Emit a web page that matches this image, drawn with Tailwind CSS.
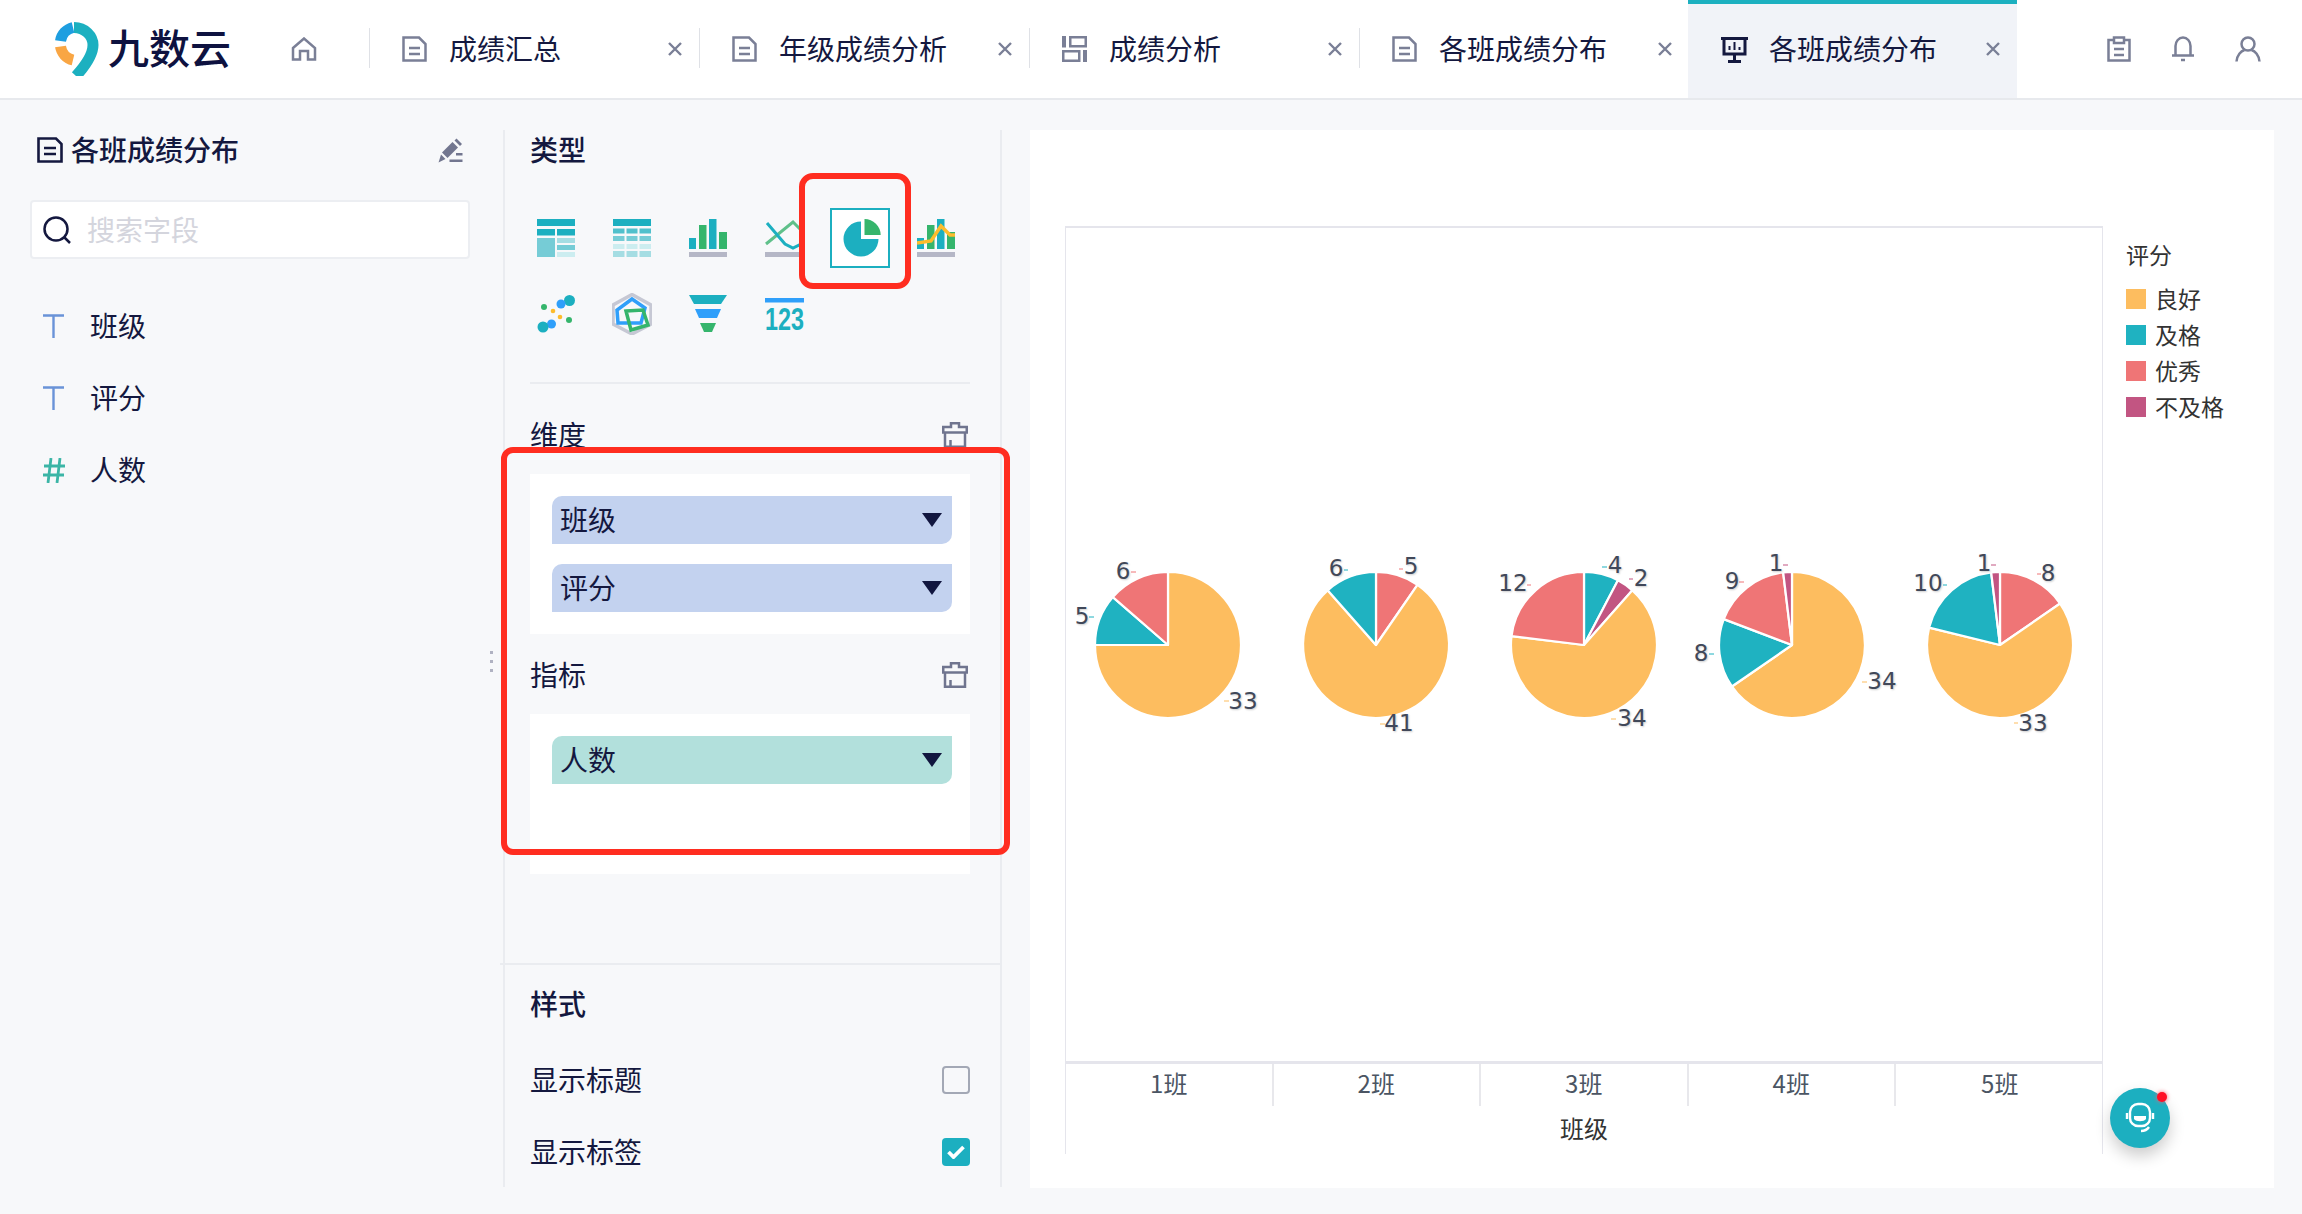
<!doctype html>
<html lang="zh">
<head>
<meta charset="utf-8">
<script src="https://cdn.jsdelivr.net/npm/@tailwindcss/browser@4"></script>
<title>各班成绩分布</title>
</head>
<body class="w-[2302px] h-[1214px] overflow-hidden bg-[#f7f8fa] text-[#14183f] font-['Noto_Sans_CJK_SC','Noto_Sans',sans-serif] text-[28px]">
<header class="flex h-[100px] bg-white border-b-2 border-[#e7e9ed]">
  <div class="flex items-center w-[291px] pl-[55px] gap-[9px]">
    <svg class="w-[44px] h-[54px]" viewBox="55 22 44 54" fill="none" stroke-width="11">
      <path d="M60.5 41 A16.5 16.5 0 0 1 73 27.5" stroke="#1e9ee0"/>
      <path d="M74 27.5 C85 27.5 93 36 93 45 C93 53 86 65 76 76" stroke="#1cb0c0"/>
      <path d="M60.5 46.5 A16.5 16.5 0 0 0 73 60" stroke="#f9a644"/>
    </svg>
    <span class="text-[41px] font-medium leading-none text-[#0e1240] pb-[6px]">九数云</span>
  </div>
  <div class="flex items-center w-[78px]">
    <svg class="w-[26px] h-[24px]" viewBox="0 0 26 24" fill="none" stroke="#7a7f96" stroke-width="2.5"><path d="M2 11 L13 1.5 L24 11 V22.5 H17 V14 H9 V22.5 H2 Z"/></svg>
  </div>
  <div class="relative flex items-center justify-between w-[330px] pl-[33px] pr-[17px]">
    <span class="absolute left-0 top-[28px] h-[40px] w-[1px] bg-[#dfe1e6]"></span>
    <div class="flex items-center gap-[22px]">
      <svg class="w-[25px] h-[26px]" viewBox="0 0 25 26" fill="none" stroke="#7a7f96" stroke-width="2.5"><path d="M1.5 1.5 H17 L23.5 8 V24.5 H1.5 Z"/><path d="M7 12 H18 M7 18 H18"/></svg>
      <span class="pb-[3px]">成绩汇总</span>
    </div>
    <svg class="w-[14px] h-[14px]" viewBox="0 0 14 14" stroke="#7a7f96" stroke-width="2.4"><path d="M1 1 L13 13 M13 1 L1 13"/></svg>
  </div>
  <div class="relative flex items-center justify-between w-[330px] pl-[33px] pr-[17px]">
    <span class="absolute left-0 top-[28px] h-[40px] w-[1px] bg-[#dfe1e6]"></span>
    <div class="flex items-center gap-[22px]">
      <svg class="w-[25px] h-[26px]" viewBox="0 0 25 26" fill="none" stroke="#7a7f96" stroke-width="2.5"><path d="M1.5 1.5 H17 L23.5 8 V24.5 H1.5 Z"/><path d="M7 12 H18 M7 18 H18"/></svg>
      <span class="pb-[3px]">年级成绩分析</span>
    </div>
    <svg class="w-[14px] h-[14px]" viewBox="0 0 14 14" stroke="#7a7f96" stroke-width="2.4"><path d="M1 1 L13 13 M13 1 L1 13"/></svg>
  </div>
  <div class="relative flex items-center justify-between w-[330px] pl-[33px] pr-[17px]">
    <span class="absolute left-0 top-[28px] h-[40px] w-[1px] bg-[#dfe1e6]"></span>
    <div class="flex items-center gap-[22px]">
      <svg class="w-[25px] h-[26px]" viewBox="0 0 25 26" fill="none" stroke="#7a7f96"><path d="M0 0 H4 V11.5 H0 Z" fill="#7a7f96" stroke="none"/><path d="M8.25 1.25 H23.75 V10.25 H8.25 Z" stroke-width="2.5"/><path d="M1.25 15.25 H17.25 V24.75 H1.25 Z" stroke-width="2.5"/><path d="M21 14 H25 V26 H21 Z" fill="#7a7f96" stroke="none"/></svg>
      <span class="pb-[3px]">成绩分析</span>
    </div>
    <svg class="w-[14px] h-[14px]" viewBox="0 0 14 14" stroke="#7a7f96" stroke-width="2.4"><path d="M1 1 L13 13 M13 1 L1 13"/></svg>
  </div>
  <div class="relative flex items-center justify-between w-[329px] pl-[33px] pr-[16px]">
    <span class="absolute left-0 top-[28px] h-[40px] w-[1px] bg-[#dfe1e6]"></span>
    <div class="flex items-center gap-[22px]">
      <svg class="w-[25px] h-[26px]" viewBox="0 0 25 26" fill="none" stroke="#7a7f96" stroke-width="2.5"><path d="M1.5 1.5 H17 L23.5 8 V24.5 H1.5 Z"/><path d="M7 12 H18 M7 18 H18"/></svg>
      <span class="pb-[3px]">各班成绩分布</span>
    </div>
    <svg class="w-[14px] h-[14px]" viewBox="0 0 14 14" stroke="#7a7f96" stroke-width="2.4"><path d="M1 1 L13 13 M13 1 L1 13"/></svg>
  </div>
  <div class="flex items-center justify-between w-[329px] h-[98px] pl-[33px] pr-[17px] bg-[#f1f3f8] border-t-4 border-[#1cb0c0]">
    <div class="flex items-center gap-[21px] -mt-[4px]">
      <svg class="w-[27px] h-[27px]" viewBox="0 0 27 27" fill="none" stroke="#14183f" stroke-width="3"><path d="M0 2.5 H27 M3 2.5 V18 H24 V2.5 M13.5 18 V24 M7 25.5 H20"/><path d="M8.5 14 V10 M13.5 14 V6 M18.5 14 V11" stroke-width="2"/></svg>
      <span class="pb-[3px]">各班成绩分布</span>
    </div>
    <svg class="w-[14px] h-[14px] -mt-[4px]" viewBox="0 0 14 14" stroke="#7a7f96" stroke-width="2.4"><path d="M1 1 L13 13 M13 1 L1 13"/></svg>
  </div>
  <div class="flex items-center ml-auto gap-[40px] pr-[41px]">
    <svg class="w-[24px] h-[26px]" viewBox="0 0 24 26" fill="none" stroke="#7a7f96" stroke-width="2.5"><path d="M7 4 H1.5 V24.5 H22.5 V4 H17"/><path d="M7 1.5 H17 V7 H7 Z M7 13 H17 M7 19 H17"/></svg>
    <svg class="w-[24px] h-[26px]" viewBox="0 0 24 26" fill="none" stroke="#7a7f96" stroke-width="2.5"><path d="M4.5 19 V10 A7.5 8.5 0 0 1 19.5 10 V19 M1 19.5 H23"/><path d="M10 24 H14"/></svg>
    <svg class="w-[26px] h-[26px]" viewBox="0 0 26 26" fill="none" stroke="#7a7f96" stroke-width="2.5"><circle cx="13" cy="8" r="6.5"/><path d="M1.5 25.5 C2 19 6 15 9.5 14 M24.5 25.5 C24 19 20 15 16.5 14"/></svg>
  </div>
</header>

<main class="relative flex h-[1114px]">
  <aside class="w-[503px] pt-[30px] shrink-0">
    <div class="flex items-center justify-between h-[40px] pl-[37px] pr-[40px]">
      <div class="flex items-center gap-[8px]">
        <svg class="w-[26px] h-[26px]" viewBox="0 0 26 26" fill="none" stroke="#14183f" stroke-width="2.6"><path d="M1.5 1.5 H19 L24.5 7 V24.5 H1.5 Z"/><path d="M7 11 H19 M7 17 H19"/></svg>
        <span class="font-medium pb-[3px]">各班成绩分布</span>
      </div>
      <svg class="w-[25px] h-[25px]" viewBox="0 0 25 25" fill="#72768f"><path d="M14.5 4 L20 9.5 L9.5 20 L4 14.5 Z"/><path d="M16.5 2.5 L18.5 .5 L24 6 L22 8 Z"/><path d="M3 16.5 L7.5 21 L.5 24.5 Z"/><path d="M18 15 H24.5 V17.5 H18 Z M11.5 21.5 H24.5 V24 H11.5 Z"/></svg>
    </div>
    <div class="flex items-center ml-[30px] mt-[30px] w-[440px] h-[59px] bg-white border-2 border-[#eceef2] rounded-[4px] pl-[11px] gap-[16px]">
      <svg class="w-[28px] h-[28px]" viewBox="0 0 28 28" fill="none" stroke="#14183f" stroke-width="2.5"><circle cx="13" cy="13" r="11.5"/><path d="M21 21 L27 27"/></svg>
      <span class="text-[#d4d5dd] pb-[2px]">搜索字段</span>
    </div>
    <ul class="mt-[31px] ml-[43px]">
      <li class="flex items-center h-[72px] gap-[26px]">
        <svg class="w-[21px] h-[24px]" viewBox="0 0 21 24" stroke="#6a93d8" stroke-width="2.4"><path d="M0 1.5 H21 M10.5 1.5 V24"/></svg>
        <span class="pb-[3px]">班级</span>
      </li>
      <li class="flex items-center h-[72px] gap-[26px]">
        <svg class="w-[21px] h-[24px]" viewBox="0 0 21 24" stroke="#6a93d8" stroke-width="2.4"><path d="M0 1.5 H21 M10.5 1.5 V24"/></svg>
        <span class="pb-[3px]">评分</span>
      </li>
      <li class="flex items-center h-[72px] gap-[25px]">
        <svg class="w-[22px] h-[25px]" viewBox="0 0 22 25" stroke="#3bb5a6" stroke-width="2.8"><path d="M8 0 L5 25 M17 0 L14 25 M1 8 H22 M0 17 H21"/></svg>
        <span class="pb-[3px]">人数</span>
      </li>
    </ul>
  </aside>

  <section class="relative w-[499px] h-[1057px] mt-[30px] shrink-0 border-x-2 border-[#eaecf0] pl-[25px]">
    <h2 class="h-[40px] leading-[39px] font-medium">类型</h2>
    <div class="grid grid-cols-[repeat(6,38px)] auto-rows-[38px] gap-[38px] ml-[7px] mt-[49px]">
      <svg class="w-[38px] h-[38px]" viewBox="0 0 38 38">
        <rect width="38" height="7" fill="#1cafc0"/><rect y="10" width="18" height="6.5" fill="#1cafc0"/><rect x="20" y="10" width="18" height="6.5" fill="#1cafc0"/>
        <rect y="19" width="18" height="19" fill="#76ccd6"/><rect x="20" y="19" width="18" height="5" fill="#a5dde3"/><rect x="20" y="26" width="18" height="5" fill="#76ccd6"/><rect x="20" y="33" width="18" height="5" fill="#ccedf0"/>
      </svg>
      <svg class="w-[38px] h-[38px]" viewBox="0 0 38 38">
        <rect width="38" height="7" fill="#1cafc0"/>
        <g fill="#51c0cc"><rect y="9.5" width="11.5" height="5"/><rect x="13.5" y="9.5" width="11" height="5"/><rect x="26.5" y="9.5" width="11.5" height="5"/></g>
        <g fill="#76ccd6"><rect y="17" width="11.5" height="5"/><rect x="13.5" y="17" width="11" height="5"/><rect x="26.5" y="17" width="11.5" height="5"/></g>
        <g fill="#ccedf0"><rect y="25" width="11.5" height="5"/><rect x="13.5" y="25" width="11" height="5"/><rect x="26.5" y="25" width="11.5" height="5"/></g>
        <g fill="#a5dde3"><rect y="32" width="11.5" height="6"/><rect x="13.5" y="32" width="11" height="6"/><rect x="26.5" y="32" width="11.5" height="6"/></g>
      </svg>
      <svg class="w-[38px] h-[38px]" viewBox="0 0 38 38">
        <rect y="33" width="38" height="5" fill="#b5b7c6"/>
        <rect y="19" width="7" height="11" fill="#1cafc0"/><rect x="10" y="6" width="7.5" height="24" fill="#35b56c"/><rect x="20" y="0" width="7.5" height="30" fill="#1cafc0"/><rect x="30" y="13" width="8" height="17" fill="#35b56c"/>
      </svg>
      <svg class="w-[38px] h-[38px]" viewBox="0 0 38 38" fill="none" stroke-width="3">
        <rect y="33" width="38" height="5" fill="#b5b7c6"/>
        <path d="M1 25 L28 3 L38 13" stroke="#5fc08a"/><path d="M2 4 L20 25 L28 29 L38 24" stroke="#1cafc0"/>
      </svg>
      <div class="w-[60px] h-[60px] -m-[11px] bg-white border-2 border-[#1cafc0]">
        <svg class="w-[56px] h-[56px]" viewBox="2 2 56 56"><path d="M31 31 V13.5 A17.5 17.5 0 1 0 48.5 31 Z" fill="#1cafc0"/><path d="M34.5 27 V11 A16.2 16.2 0 0 1 50.7 27 Z" fill="#35b56c"/></svg>
      </div>
      <svg class="w-[38px] h-[38px]" viewBox="0 0 38 38" fill="none">
        <rect y="33" width="38" height="5" fill="#b5b7c6"/>
        <rect y="19" width="7" height="11" fill="#1cafc0"/><rect x="10" y="6" width="7.5" height="24" fill="#35b56c"/><rect x="20" y="0" width="7.5" height="30" fill="#1cafc0"/><rect x="30" y="13" width="8" height="17" fill="#35b56c"/>
        <path d="M0 24 L14 22 L24 7 L33 16 L38 16" stroke="#fdbc2c" stroke-width="3.5"/>
      </svg>
      <svg class="w-[38px] h-[38px]" viewBox="0 0 38 38">
        <circle cx="32.5" cy="5.5" r="5.5" fill="#1cafc0"/><circle cx="24" cy="9" r="4.5" fill="#2f9ffa"/><circle cx="7" cy="12" r="3" fill="#35b56c"/><circle cx="16" cy="16" r="2.3" fill="#fdbc2c"/><circle cx="23" cy="22" r="2.3" fill="#fdbc2c"/><circle cx="32" cy="25" r="3" fill="#35b56c"/><circle cx="14.5" cy="29" r="4.5" fill="#2f9ffa"/><circle cx="6" cy="32" r="5.5" fill="#1cafc0"/>
      </svg>
      <svg class="w-[40px] h-[42px] -ml-[1px] -mt-[2px]" viewBox="-1 -2 40 42" fill="none">
        <path d="M19 -.5 L38 10 V29 L19 39 L0 29 V10 Z" stroke="#c6c8d4" stroke-width="3.5"/>
        <path d="M19 4 L32 13 L28 28 L5 28 L4 15 Z" stroke="#2f9ffa" stroke-width="3.5"/>
        <path d="M13 16 L30 15 L35 30 L18 35 Z" stroke="#35b56c" stroke-width="3.5"/>
      </svg>
      <svg class="w-[38px] h-[38px]" viewBox="0 0 38 38">
        <path d="M0 0 H38 L32 9 H5 Z" fill="#1cafc0"/><path d="M6 14 H32 L28 23 H10 Z" fill="#2f9ffa"/><path d="M11 28 H27 L23 37 H15 Z" fill="#35b56c"/>
      </svg>
      <svg class="w-[39px] h-[38px] overflow-visible" viewBox="0 0 39 38">
        <rect y="3" width="39" height="4.5" fill="#2f9ffa"/>
        <text x="0" y="35" textLength="39" lengthAdjust="spacingAndGlyphs" class="font-['Liberation_Sans',sans-serif] font-bold text-[32px] fill-[#1cafc0]">123</text>
      </svg>
    </div>
    <div class="mt-[49px] w-[440px] h-[2px] bg-[#eaecf0]"></div>

    <div class="flex items-center justify-between w-[440px] h-[40px] mt-[31px] pr-[2px]">
      <span class="pb-[3px]">维度</span>
      <svg class="w-[26px] h-[26px]" viewBox="0 0 26 26" fill="none" stroke="#70758f" stroke-width="2.5"><path d="M9 5 V1.25 H17 V5 H24.75 V10.5 H1.25 V5 Z M3 10.5 V24.75 H23 V10.5 M8.5 24.75 V18"/></svg>
    </div>
    <div class="mt-[19px] w-[440px] h-[160px] bg-white pl-[22px] pt-[22px] flex flex-col gap-[20px]">
      <div class="flex items-center justify-between w-[400px] h-[48px] pl-[8px] pr-[10px] bg-[#c3d2ef] rounded-tl-[10px] rounded-br-[10px]">
        <span class="pb-[3px]">班级</span><span class="w-0 h-0 border-x-[10px] border-x-transparent border-t-[14px] border-t-[#11163f]"></span>
      </div>
      <div class="flex items-center justify-between w-[400px] h-[48px] pl-[8px] pr-[10px] bg-[#c3d2ef] rounded-tl-[10px] rounded-br-[10px]">
        <span class="pb-[3px]">评分</span><span class="w-0 h-0 border-x-[10px] border-x-transparent border-t-[14px] border-t-[#11163f]"></span>
      </div>
    </div>
    <div class="flex items-center justify-between w-[440px] h-[40px] mt-[21px] pr-[2px]">
      <span class="pb-[3px]">指标</span>
      <svg class="w-[26px] h-[26px]" viewBox="0 0 26 26" fill="none" stroke="#70758f" stroke-width="2.5"><path d="M9 5 V1.25 H17 V5 H24.75 V10.5 H1.25 V5 Z M3 10.5 V24.75 H23 V10.5 M8.5 24.75 V18"/></svg>
    </div>
    <div class="mt-[19px] w-[440px] h-[160px] bg-white pl-[22px] pt-[22px]">
      <div class="flex items-center justify-between w-[400px] h-[48px] pl-[8px] pr-[10px] bg-[#b2e0dc] rounded-tl-[10px] rounded-br-[10px]">
        <span class="pb-[3px]">人数</span><span class="w-0 h-0 border-x-[10px] border-x-transparent border-t-[14px] border-t-[#11163f]"></span>
      </div>
    </div>
    <div class="mt-[89px] -ml-[30px] w-[500px] h-[2px] bg-[#eaecf0]"></div>
    <h2 class="h-[40px] leading-[39px] mt-[19px] font-medium">样式</h2>
    <div class="flex items-center justify-between w-[440px] h-[40px] mt-[36px]">
      <span class="pb-[3px]">显示标题</span>
      <span class="w-[28px] h-[28px] rounded-[4px] border-2 border-[#a3a8b5]"></span>
    </div>
    <div class="flex items-center justify-between w-[440px] h-[40px] mt-[32px]">
      <span class="pb-[3px]">显示标签</span>
      <span class="flex items-center justify-center w-[28px] h-[28px] rounded-[4px] bg-[#1cafc0]">
        <svg class="w-[18px] h-[14px]" viewBox="0 0 18 14" fill="none" stroke="#fff" stroke-width="3.8"><path d="M1.5 7 L6.5 12 L16.5 2"/></svg>
      </span>
    </div>
    <div class="absolute -left-[15px] top-[521px] flex flex-col gap-[6px]">
      <span class="w-[3px] h-[3px] bg-[#b0b2c2]"></span><span class="w-[3px] h-[3px] bg-[#b0b2c2]"></span><span class="w-[3px] h-[3px] bg-[#b0b2c2]"></span>
    </div>
  </section>

  <section class="relative flex w-[1244px] h-[1058px] mt-[30px] ml-[28px] bg-white shrink-0">
    <div class="w-[1038px] ml-[35px] mt-[96px] shrink-0">
      <div class="h-[838px] border-x border-t-2 border-[#e5e5ec] border-b-[3px]"></div>
      <div class="grid grid-cols-[repeat(5,207.5px)] h-[42px] border-x border-[#e5e5ec] text-[24px] leading-[37px] text-center text-[#4b5563]">
        <span class="border-r-2 border-[#e8e8ec]">1班</span>
        <span class="border-r-2 border-[#e8e8ec]">2班</span>
        <span class="border-r-2 border-[#e8e8ec]">3班</span>
        <span class="border-r-2 border-[#e8e8ec]">4班</span>
        <span>5班</span>
      </div>
      <div class="h-[48px] border-x border-[#e5e5ec] text-[24px] leading-[43px] text-center text-[#333]">班级</div>
    </div>
    <div class="ml-[23px] mt-[106px] text-[23px] leading-[36px] text-[#333]">
      <div class="h-[36px]">评分</div>
      <ul class="mt-[9px]">
        <li class="flex items-center h-[36px] gap-[9px]"><span class="w-[20px] h-[20px] bg-[#fdbd5f]"></span><span class="pb-[3px]">良好</span></li>
        <li class="flex items-center h-[36px] gap-[9px]"><span class="w-[20px] h-[20px] bg-[#1fb2c1]"></span><span class="pb-[3px]">及格</span></li>
        <li class="flex items-center h-[36px] gap-[9px]"><span class="w-[20px] h-[20px] bg-[#ef7576]"></span><span class="pb-[3px]">优秀</span></li>
        <li class="flex items-center h-[36px] gap-[9px]"><span class="w-[20px] h-[20px] bg-[#c25582]"></span><span class="pb-[3px]">不及格</span></li>
      </ul>
    </div>

    <svg class="absolute left-0 top-0 w-[1244px] h-[1058px] pointer-events-none" viewBox="1030 130 1244 1058">
      <g stroke="#fff" stroke-width="2.2" stroke-linejoin="round">
        <g transform="translate(1168 645) scale(1.014)">
          <path d="M0 0 V-72 A72 72 0 1 1 -72 0 Z" fill="#fdbd5f"/>
          <path d="M0 0 L-72 0 A72 72 0 0 1 -54.4 -47.2 Z" fill="#1fb2c1"/>
          <path d="M0 0 L-54.4 -47.2 A72 72 0 0 1 0 -72 Z" fill="#ef7576"/>
        </g>
        <g transform="translate(1376 645) scale(1.014)">
          <path d="M0 0 V-72 A72 72 0 0 1 40.9 -59.3 Z" fill="#ef7576"/>
          <path d="M0 0 L40.9 -59.3 A72 72 0 1 1 -47.7 -53.9 Z" fill="#fdbd5f"/>
          <path d="M0 0 L-47.7 -53.9 A72 72 0 0 1 0 -72 Z" fill="#1fb2c1"/>
        </g>
        <g transform="translate(1584 645) scale(1.014)">
          <path d="M0 0 V-72 A72 72 0 0 1 33.5 -63.8 Z" fill="#1fb2c1"/>
          <path d="M0 0 L33.5 -63.8 A72 72 0 0 1 47.7 -53.9 Z" fill="#c25582"/>
          <path d="M0 0 L47.7 -53.9 A72 72 0 1 1 -71.5 -8.7 Z" fill="#fdbd5f"/>
          <path d="M0 0 L-71.5 -8.7 A72 72 0 0 1 0 -72 Z" fill="#ef7576"/>
        </g>
        <g transform="translate(1792 645) scale(1.014)">
          <path d="M0 0 V-72 A72 72 0 1 1 -59.3 40.9 Z" fill="#fdbd5f"/>
          <path d="M0 0 L-59.3 40.9 A72 72 0 0 1 -67.3 -25.5 Z" fill="#1fb2c1"/>
          <path d="M0 0 L-67.3 -25.5 A72 72 0 0 1 -8.7 -71.5 Z" fill="#ef7576"/>
          <path d="M0 0 L-8.7 -71.5 A72 72 0 0 1 0 -72 Z" fill="#c25582"/>
        </g>
        <g transform="translate(2000 645) scale(1.014)">
          <path d="M0 0 V-72 A72 72 0 0 1 59.3 -40.9 Z" fill="#ef7576"/>
          <path d="M0 0 L59.3 -40.9 A72 72 0 1 1 -69.9 -17.2 Z" fill="#fdbd5f"/>
          <path d="M0 0 L-69.9 -17.2 A72 72 0 0 1 -8.7 -71.5 Z" fill="#1fb2c1"/>
          <path d="M0 0 L-8.7 -71.5 A72 72 0 0 1 0 -72 Z" fill="#c25582"/>
        </g>
      </g>
      <g stroke-width="1" fill="none">
        <path stroke="#ef7576" d="M1131 572 H1136 M1399 569 H1403 M1527 585 H1531 M1739 582 H1744 M2037 574 H2041"/>
        <path stroke="#1fb2c1" d="M1089 617 H1094 M1344 570 H1348 M1602 567 H1607 M1709 654 H1714 M1943 585 H1947"/>
        <path stroke="#fdbd5f" d="M1224 701 H1229 M1380 724 H1385 M1611 719 H1616 M1862 682 H1867 M2014 723 H2018"/>
        <path stroke="#c25582" d="M1629 579 H1633 M1783 565 H1788 M1991 565 H1996"/>
      </g>
      <g class="font-['DejaVu_Sans',sans-serif] text-[23px] fill-[#414859] [text-shadow:1px_1px_2px_rgba(0,0,0,0.2)]" text-anchor="middle" dominant-baseline="central">
        <text x="1123" y="571">6</text><text x="1082" y="616">5</text><text x="1243" y="701">33</text>
        <text x="1336" y="568">6</text><text x="1411" y="566">5</text><text x="1399" y="723">41</text>
        <text x="1615" y="565">4</text><text x="1641" y="578">2</text><text x="1513" y="583">12</text><text x="1632" y="718">34</text>
        <text x="1776" y="563">1</text><text x="1732" y="581">9</text><text x="1701" y="653">8</text><text x="1882" y="681">34</text>
        <text x="1984" y="563">1</text><text x="2048" y="573">8</text><text x="1928" y="583">10</text><text x="2033" y="723">33</text>
      </g>
    </svg>

    <div class="absolute left-[1080px] top-[958px] flex items-center justify-center w-[60px] h-[60px] rounded-full bg-[#1cafc0] shadow-[0_8px_16px_rgba(0,0,0,0.2)]">
      <svg class="w-[30px] h-[32px]" viewBox="0 0 30 32" fill="none" stroke="#fff" stroke-width="2.4">
        <rect x="5" y="2" width="20" height="22" rx="8"/><path d="M2 11 V17 M28 11 V17 M24 25 C22 28 19 29 16 29"/><path d="M9 14 H21 V17 C19 20 11 20 9 17 Z" fill="#fff" stroke="none"/>
      </svg>
      <span class="absolute right-[3px] top-[4px] w-[10px] h-[10px] rounded-full bg-[#ff0f25] shadow-[0_0_4px_#ff5a6a]"></span>
    </div>
  </section>

  <div class="absolute left-[799px] top-[73px] w-[112px] h-[116px] rounded-[14px] border-[6px] border-[#ff2d20]"></div>
  <div class="absolute left-[501px] top-[347px] w-[509px] h-[408px] rounded-[12px] border-[6px] border-[#ff2d20]"></div>
</main>
</body>
</html>
